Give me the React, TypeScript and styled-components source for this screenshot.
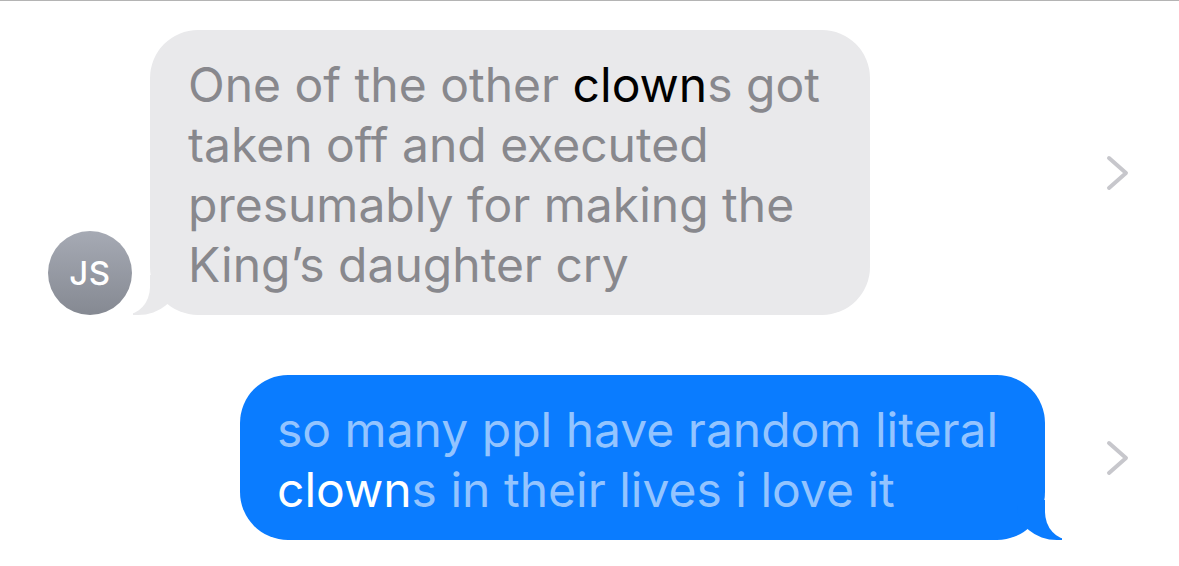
import styled, { createGlobalStyle } from "styled-components";

const GlobalStyle = createGlobalStyle`
  html, body {
    margin: 0;
    padding: 0;
    background: #ffffff;
  }
  body {
    font-family: Inter, "Liberation Sans", sans-serif;
  }
`;

// ── Layout ───────────────────────────────────────────────────────────────────

const Screen = styled.div`
  width: 1179px;
  height: 566px;
  box-sizing: border-box;
  border-top: 1px solid #b4b4b4;
  padding-top: 29px;
  display: flex;
  flex-direction: column;
  gap: 60px;
  overflow: hidden;
`;

const Row = styled.div<{ $out?: boolean }>`
  display: flex;
  align-items: center;
  padding-left: ${(p) => (p.$out ? "240px" : "48px")};
  padding-right: 48px;
`;

const Group = styled.div`
  display: flex;
  align-items: flex-end;
  gap: 18px;
`;

const Avatar = styled.div`
  position: relative;
  z-index: 2;
  width: 84px;
  height: 84px;
  border-radius: 50%;
  background: linear-gradient(180deg, #a6aab4 0%, #858992 100%);
  color: #ffffff;
  font-size: 33px;
  font-weight: 500;
  letter-spacing: 0.5px;
  display: flex;
  align-items: center;
  justify-content: center;
`;

// ── Bubbles ──────────────────────────────────────────────────────────────────

const Bubble = styled.div<{ $out?: boolean }>`
  position: relative;
  box-sizing: border-box;
  width: ${(p) => (p.$out ? "805px" : "720px")};
  padding: 25px 30px 20px ${(p) => (p.$out ? "37px" : "38px")};
  border-radius: 48px;
  background: ${(p) => (p.$out ? "#0a7cff" : "#e9e9eb")};
  color: ${(p) => (p.$out ? "#93c4ff" : "#88888d")};
  font-size: 48px;
  line-height: 60px;
  white-space: nowrap;

  &::before {
    content: "";
    position: absolute;
    bottom: 0;
    ${(p) => (p.$out ? "right: -17px;" : "left: -17px;")}
    width: 45px;
    height: 40px;
    background: ${(p) => (p.$out ? "#0a7cff" : "#e9e9eb")};
    ${(p) =>
      p.$out
        ? "border-bottom-left-radius: 40px 34px;"
        : "border-bottom-right-radius: 40px 34px;"}
  }

  &::after {
    content: "";
    position: absolute;
    bottom: 0;
    ${(p) => (p.$out ? "right: -60px;" : "left: -60px;")}
    width: 60px;
    height: 40px;
    background: #ffffff;
    ${(p) =>
      p.$out
        ? "border-bottom-left-radius: 25px 28px;"
        : "border-bottom-right-radius: 25px 28px;"}
  }
`;

const Text = styled.span`
  position: relative;
  z-index: 1;
`;

const Hit = styled.span<{ $out?: boolean }>`
  color: ${(p) => (p.$out ? "#ffffff" : "#000000")};
`;

const Chevron = styled.svg`
  margin-left: auto;
  width: 26px;
  height: 36px;
  flex-shrink: 0;
`;

const ChevronIcon = () => (
  <Chevron viewBox="0 0 26 36">
    <path
      d="M4 3 L21 18 L4 33"
      fill="none"
      stroke="#c7c7cc"
      strokeWidth="4"
      strokeLinecap="round"
      strokeLinejoin="round"
    />
  </Chevron>
);

// ── Component ────────────────────────────────────────────────────────────────

const App = () => (
  <>
    <GlobalStyle />
    <Screen>
      <Row>
        <Group>
          <Avatar>JS</Avatar>
          <Bubble>
            <Text>
              One of the other <Hit>clown</Hit>s got
              <br />
              taken off and executed
              <br />
              presumably for making the
              <br />
              King’s daughter cry
            </Text>
          </Bubble>
        </Group>
        <ChevronIcon />
      </Row>

      <Row $out>
        <Bubble $out>
          <Text>
            so many ppl have random literal
            <br />
            <Hit $out>clown</Hit>s in their lives i love it
          </Text>
        </Bubble>
        <ChevronIcon />
      </Row>
    </Screen>
  </>
);

export default App;
